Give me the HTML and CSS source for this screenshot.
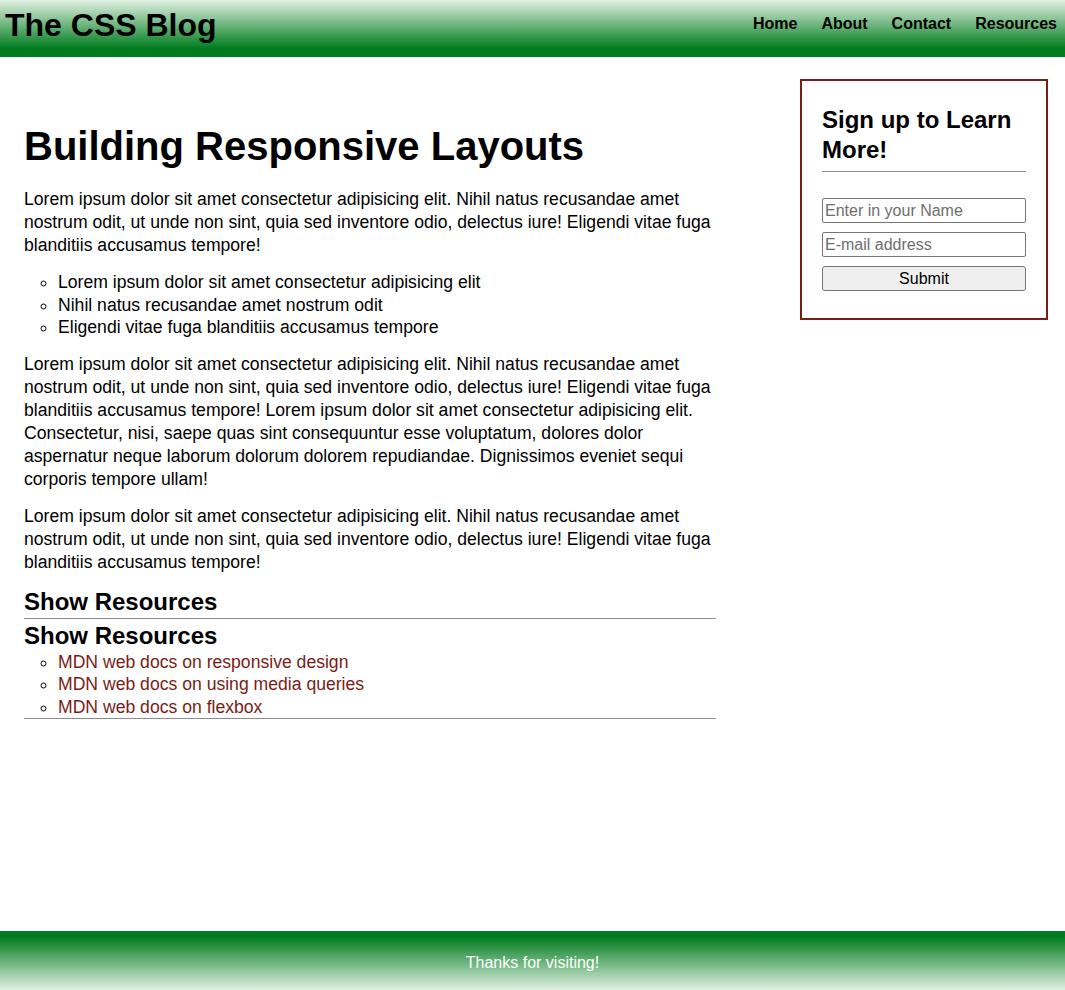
FILE: index.html
```html
<!DOCTYPE html>
<html lang="en">
<head>
<meta charset="utf-8">
<title>The CSS Blog</title>
<link rel="stylesheet" href="styles.css">
</head>
<body>
<header class="site-header">
  <div class="logo">The CSS Blog</div>
  <nav class="nav">
    <a href="#">Home</a>
    <a href="#">About</a>
    <a href="#">Contact</a>
    <a href="#">Resources</a>
  </nav>
</header>
<div class="layout">
  <main class="content">
    <h1 class="title">Building Responsive Layouts</h1>
    <p>Lorem ipsum dolor sit amet consectetur adipisicing elit. Nihil natus recusandae amet nostrum odit, ut unde non sint, quia sed inventore odio, delectus iure! Eligendi vitae fuga blanditiis accusamus tempore!</p>
    <ul class="list">
      <li>Lorem ipsum dolor sit amet consectetur adipisicing elit</li>
      <li>Nihil natus recusandae amet nostrum odit</li>
      <li>Eligendi vitae fuga blanditiis accusamus tempore</li>
    </ul>
    <p>Lorem ipsum dolor sit amet consectetur adipisicing elit. Nihil natus recusandae amet nostrum odit, ut unde non sint, quia sed inventore odio, delectus iure! Eligendi vitae fuga blanditiis accusamus tempore! Lorem ipsum dolor sit amet consectetur adipisicing elit. Consectetur, nisi, saepe quas sint consequuntur esse voluptatum, dolores dolor aspernatur neque laborum dolorum dolorem repudiandae. Dignissimos eveniet sequi corporis tempore ullam!</p>
    <p>Lorem ipsum dolor sit amet consectetur adipisicing elit. Nihil natus recusandae amet nostrum odit, ut unde non sint, quia sed inventore odio, delectus iure! Eligendi vitae fuga blanditiis accusamus tempore!</p>
    <div class="resources">
      <h2 class="res-toggle">Show Resources</h2>
      <div class="res-body">
        <h2 class="res-title">Show Resources</h2>
        <ul class="list res-list">
          <li><a href="#">MDN web docs on responsive design</a></li>
          <li><a href="#">MDN web docs on using media queries</a></li>
          <li><a href="#">MDN web docs on flexbox</a></li>
        </ul>
      </div>
    </div>
  </main>
  <aside class="signup">
    <h3 class="signup-title">Sign up to Learn More!</h3>
    <form class="signup-form">
      <input class="field" type="text" placeholder="Enter in your Name">
      <input class="field" type="email" placeholder="E-mail address">
      <button class="submit" type="button">Submit</button>
    </form>
  </aside>
</div>
<footer class="site-footer">Thanks for visiting!</footer>
</body>
</html>
```
FILE: styles.css
```css
* { box-sizing: border-box; }
html, body { margin: 0; padding: 0; }
body {
  font-family: "Liberation Sans", Arial, Helvetica, sans-serif;
  color: #000;
  min-height: 100vh;
  display: flex;
  flex-direction: column;
}
.site-header {
  height: 57px;
  background: linear-gradient(to bottom, #e1f1e3 0%, #007c1e 85%, #007c1e 100%);
  display: flex;
  align-items: center;
  justify-content: space-between;
  padding: 0 8px 7px 5px;
}
.logo {
  font-size: 32px;
  font-weight: bold;
  line-height: 1;
}
.nav { display: flex; gap: 24px; padding-bottom: 2px; }
.nav a {
  color: #000;
  text-decoration: none;
  font-weight: bold;
  font-size: 16px;
}
.layout {
  flex: 1;
  display: grid;
  grid-template-columns: 692px 248px;
  column-gap: 84px;
  padding: 22px 17px 40px 24px;
  align-items: start;
}
.content { font-size: 17.6px; line-height: 23px; padding-top: 44px; }
.title {
  font-size: 40px;
  line-height: 46px;
  margin: 0 0 19px;
}
.content p { margin: 0 0 14px; }
.list {
  margin: 0 0 14px;
  padding-left: 34px;
  list-style: circle;
  line-height: 22.5px;
}
.resources { margin-top: 3px; }
.res-toggle, .res-title {
  font-size: 24px;
  line-height: 28px;
  margin: 0;
}
.res-toggle { border-bottom: 1px solid #8c8c8c; padding-bottom: 2px; margin-bottom: 3px; }
.res-body { border-bottom: 1px solid #8c8c8c; }
.res-list { margin: 0; padding-top: 1px; }
.res-list a { color: #7b1c14; text-decoration: none; }
.signup {
  border: 2px solid #7a1d16;
  padding: 24px 20px 27px;
}
.signup-title {
  font-size: 24px;
  line-height: 30px;
  margin: 0 0 26px;
  padding-bottom: 6px;
  border-bottom: 1px solid #8c8c8c;
}
.signup-form { display: flex; flex-direction: column; gap: 9px; }
.field {
  height: 25px;
  font-family: "Liberation Sans", Arial, sans-serif;
  font-size: 16px;
  padding: 0 2px;
  border: 1px solid #767676;
  border-radius: 2px;
  background: #fff;
}
.field::placeholder { color: #6e6e6e; }
.submit {
  height: 25px;
  font-family: "Liberation Sans", Arial, sans-serif;
  font-size: 16px;
  color: #000;
  background: #efefef;
  border: 1px solid #767676;
  border-radius: 3px;
}
.site-footer {
  height: 59px;
  background: linear-gradient(to bottom, #007c1e 0%, #007c1e 10%, #e1f1e3 100%);
  color: #fff;
  font-size: 16px;
  display: flex;
  align-items: center;
  justify-content: center;
  padding-top: 4px;
}
```
